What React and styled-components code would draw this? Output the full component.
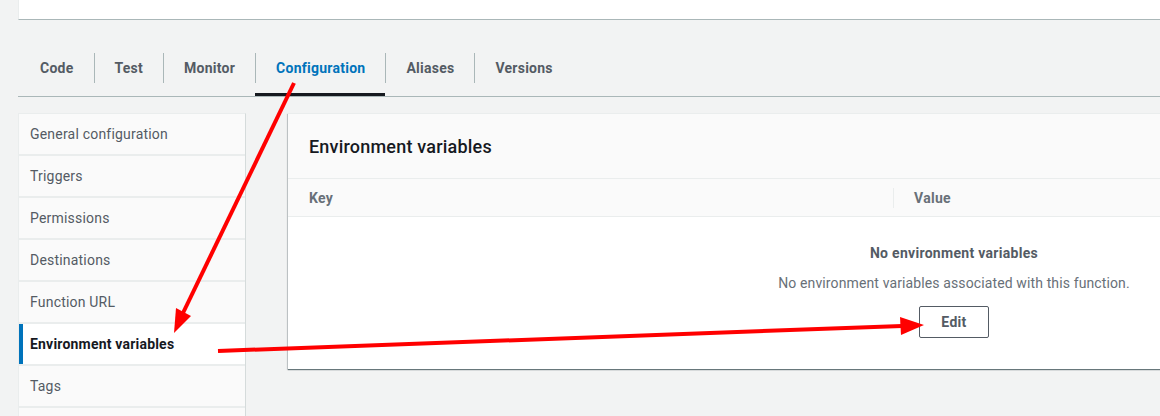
import React from 'react'
import styled, { createGlobalStyle } from 'styled-components'

const GlobalStyle = createGlobalStyle`
    body {
        margin: 0;
        background-color: #f2f3f3;
        font-family: Roboto, "Liberation Sans", Arial, sans-serif;
        overflow: hidden;
    }
`
const Page = styled.div`
    position: relative;
    width: 1160px;
    height: 416px;
    overflow: hidden;
    padding-left: 18px;
    box-sizing: border-box;
`
const TopCard = styled.div`
    width: 1300px;
    height: 20px;
    background-color: white;
    border-left: 1px solid #eaeded;
    border-bottom: 1px solid #aab7b8;
    box-sizing: border-box;
`
const TabBar = styled.div`
    display: flex;
    margin-top: 33px;
    width: 1300px;
    border-bottom: 1px solid #aab7b8;
`
const Tab = styled.div`
    height: 43px;
    box-sizing: border-box;
    border-bottom: 3px solid ${p => p.active ? '#16191f' : 'transparent'};
`
const TabLabel = styled.div`
    height: 30px;
    line-height: 30px;
    padding: 0 20px 0 ${p => p.first ? '22px' : '20px'};
    border-left: ${p => p.first ? 'none' : '1px solid #aab7b8'};
    font-size: 14px;
    font-weight: 700;
    letter-spacing: 0.25px;
    color: ${p => p.active ? '#0073bb' : '#545b64'};
`
const Main = styled.div`
    display: flex;
    align-items: flex-start;
    margin-top: 16px;
`
const SideNav = styled.div`
    width: 228px;
    flex-shrink: 0;
    margin-right: 42px;
    display: flex;
    flex-direction: column;
    gap: 2px;
    background-color: #eaeded;
    border: 1px solid #eaeded;
    border-right-color: #d5dbdb;
    box-sizing: border-box;
`
const SideItem = styled.div`
    height: 40px;
    display: flex;
    align-items: center;
    white-space: nowrap;
    background-color: ${p => p.active ? 'white' : '#fafafa'};
    border-left: ${p => p.active ? '4px solid #0073bb' : 'none'};
    padding-left: ${p => p.active ? '7px' : '11px'};
    font-size: 14px;
    font-weight: ${p => p.active ? 700 : 400};
    letter-spacing: 0.2px;
    color: ${p => p.active ? '#16191f' : '#545b64'};
`
const Panel = styled.div`
    width: 1332px;
    flex-shrink: 0;
    background-color: white;
    border-top: 1px solid #eaeded;
    box-shadow: 0 1px 1px 0 rgba(0, 28, 36, 0.5), -1px 1px 1px 0 rgba(0, 28, 36, 0.15);
`
const PanelHeader = styled.div`
    height: 64px;
    display: flex;
    align-items: center;
    padding: 0 21px;
    background-color: #fafafa;
    border-bottom: 1px solid #eaeded;
`
const PanelTitle = styled.h2`
    margin: 0;
    font-size: 18px;
    font-weight: 500;
    letter-spacing: 0.2px;
    color: #16191f;
`
const TableHead = styled.div`
    height: 37px;
    display: flex;
    align-items: center;
    background-color: #fafafa;
    border-bottom: 1px solid #eaeded;
`
const HeadCell = styled.div`
    width: ${p => p.width || 'auto'};
    height: 20px;
    line-height: 20px;
    padding-left: ${p => p.divider ? '20px' : '21px'};
    border-left: ${p => p.divider ? '1px solid #eaeded' : 'none'};
    box-sizing: border-box;
    font-size: 14px;
    font-weight: 700;
    letter-spacing: 0.3px;
    color: #687078;
`
const Empty = styled.div`
    height: 152px;
    display: flex;
    flex-direction: column;
    align-items: center;
    padding-top: 26px;
    box-sizing: border-box;
`
const EmptyTitle = styled.div`
    font-size: 14px;
    font-weight: 700;
    letter-spacing: 0.3px;
    color: #545b64;
    line-height: 20px;
`
const EmptyText = styled.div`
    margin-top: 10px;
    font-size: 14px;
    letter-spacing: 0.12px;
    color: #687078;
    line-height: 20px;
`
const Button = styled.button`
    margin-top: 13px;
    width: 70px;
    height: 32px;
    border: 1px solid #545b64;
    border-radius: 2px;
    background-color: white;
    font-family: inherit;
    font-size: 14px;
    font-weight: 700;
    letter-spacing: 0.3px;
    color: #545b64;
`
const Overlay = styled.svg`
    position: absolute;
    left: 0;
    top: 0;
    pointer-events: none;
`

const tabs = ['Code', 'Test', 'Monitor', 'Configuration', 'Aliases', 'Versions']
// last row is only partly on screen, its label falls below the fold
const sideItems = ['General configuration', 'Triggers', 'Permissions', 'Destinations', 'Function URL', 'Environment variables', 'Tags', '']

export default function App() {
    return (
        <Page>
            <GlobalStyle />
            <TopCard />
            <TabBar>
                {tabs.map((t, i) => (
                    <Tab key={t} active={t === 'Configuration'}>
                        <TabLabel first={i === 0} active={t === 'Configuration'}>{t}</TabLabel>
                    </Tab>
                ))}
            </TabBar>
            <Main>
                <SideNav>
                    {sideItems.map((s, i) => (
                        <SideItem key={i} active={s === 'Environment variables'}>{s}</SideItem>
                    ))}
                </SideNav>
                <Panel>
                    <PanelHeader>
                        <PanelTitle>Environment variables</PanelTitle>
                    </PanelHeader>
                    <TableHead>
                        <HeadCell width="605px">Key</HeadCell>
                        <HeadCell divider>Value</HeadCell>
                    </TableHead>
                    <Empty>
                        <EmptyTitle>No environment variables</EmptyTitle>
                        <EmptyText>No environment variables associated with this function.</EmptyText>
                        <Button>Edit</Button>
                    </Empty>
                </Panel>
            </Main>
            <Overlay width="1160" height="416" viewBox="0 0 1160 416">
                <line x1="294" y1="83" x2="183" y2="313" stroke="#f00" strokeWidth="4" />
                <polygon points="174,333 191,316 176,308" fill="#f00" />
                <line x1="218" y1="351" x2="902" y2="326" stroke="#f00" strokeWidth="4" />
                <polygon points="924,325 901,335 900,317" fill="#f00" />
            </Overlay>
        </Page>
    )
}
